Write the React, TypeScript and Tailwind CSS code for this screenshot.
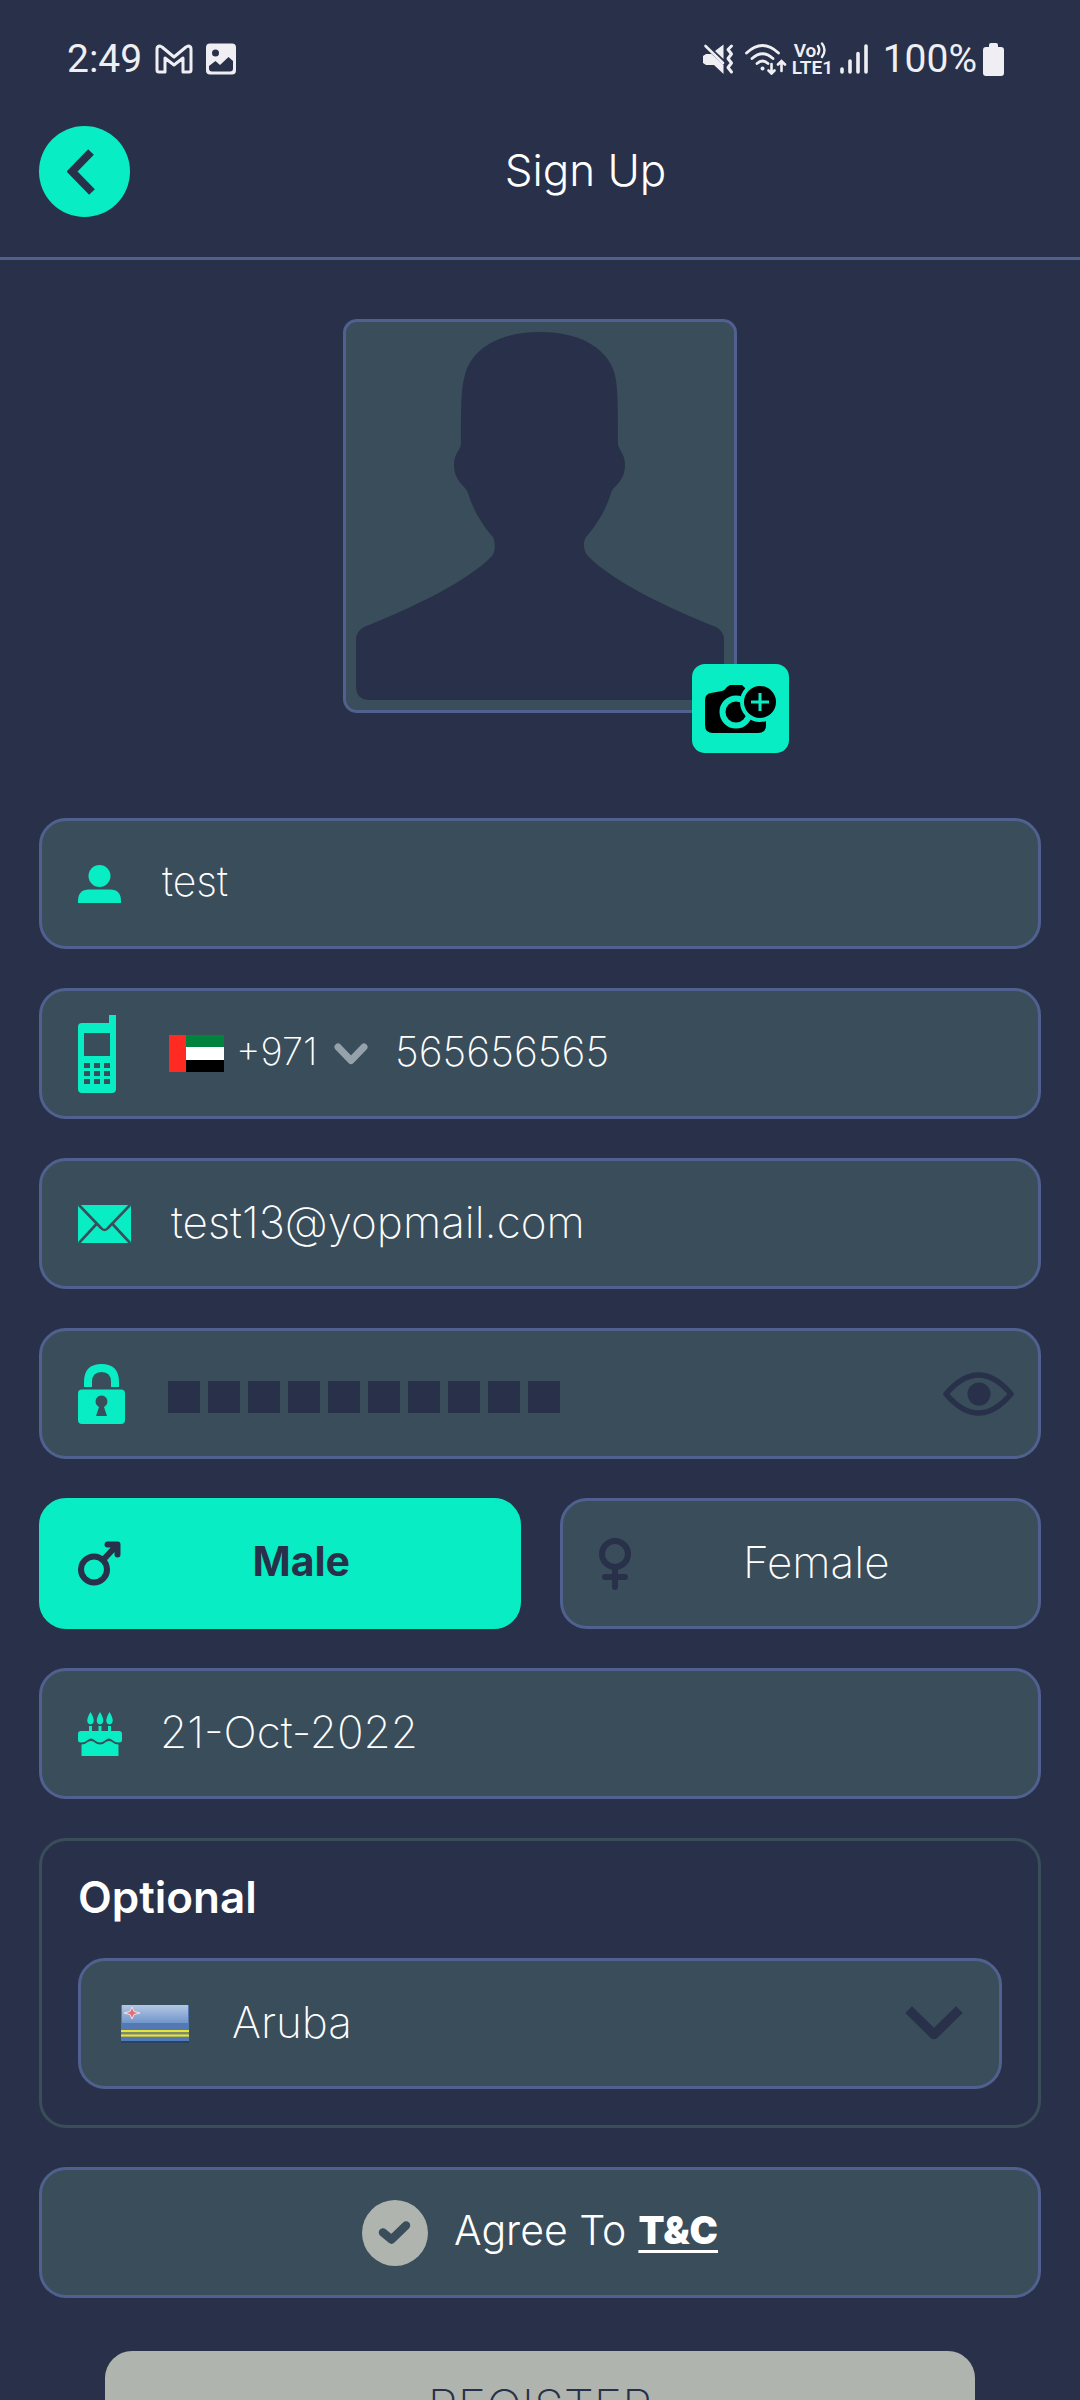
import { useState, type ReactNode } from "react";

const field =
  "flex min-h-[131px] items-center rounded-[27px] border-3 border-[#50618f] bg-[#3a4d5b] px-9";
const inputText = "min-w-0 flex-1 bg-transparent pb-1 font-extralight text-white outline-none";

function StatusBar() {
  return (
    <div className="flex h-[118px] items-center justify-between pr-[76px] pl-[67px] font-[Roboto,sans-serif] text-[39px] leading-none text-[#efeff3]">
      <div className="flex items-center">
        <span>2:49</span>
        <svg className="ml-[13px] h-[30px] w-[38px]" viewBox="0 0 38 30" fill="none" stroke="currentColor" strokeWidth="3" strokeLinejoin="round" aria-hidden="true">
          <path d="M2 5Q2 2 5 2L7 3 19 13 31 3 33 2Q36 2 36 5V26Q36 28 34 28H28V14L19 21 10 14V28H4Q2 28 2 26Z" />
        </svg>
        <svg className="ml-3 h-8 w-8" viewBox="0 0 32 32" aria-hidden="true">
          <path fill="currentColor" fillRule="evenodd" d="M5 .500H27Q31 .500 31 4.500V27.500Q31 31.500 27 31.500H5Q1 31.500 1 27.500V4.500Q1 .500 5 .500ZM10.500 6.500A3.500 3.500 0 1 0 10.500 13.500 3.500 3.500 0 0 0 10.500 6.500ZM4 23V25.500Q4 28.500 7 28.500H25Q28 28.500 28 25.500V18L23.500 14 15 22 10.500 18Z" />
        </svg>
      </div>
      <div className="flex items-center">
        <svg className="h-8 w-8" viewBox="0 0 32 32" aria-hidden="true">
          <path fill="currentColor" d="M1 13 4 11H9.500L21.500 22V31L12 22H4L1 20ZM13 8 21.500 1.500V16Z" />
          <path fill="none" stroke="currentColor" strokeWidth="2.600" strokeLinecap="round" d="M3.500 3 21 20" />
          <path fill="none" stroke="currentColor" strokeWidth="3" strokeLinecap="round" strokeLinejoin="round" d="M29.500 3 26 6.500 29.500 11 26 15.500 29.500 20 26 24.500 29.500 29" />
        </svg>
        <svg className="ml-[11px] h-8 w-[42px]" viewBox="0 0 42 32" fill="none" stroke="currentColor" strokeWidth="2.800" strokeLinecap="round" aria-hidden="true">
          <path d="M1.500 10Q17.500-5 33.500 10M7 15.500Q17.500 6 28 15.500M12 20.500Q17.500 15.500 23 20.500" />
          <circle cx="17.500" cy="25.500" r="2" fill="currentColor" stroke="none" />
          <path strokeWidth="2.600" d="M26.500 21V30M23.500 27.500 26.500 30.500 29.500 27.500M36.500 28V18.500M33 21.500 36.500 18 40 21.500" />
        </svg>
        <div className="ml-[5px] flex w-[42px] flex-col items-start text-[19px] leading-[17px] font-semibold">
          <span className="flex items-center pl-0.5">
            Vo
            <svg className="h-[17px] w-3" viewBox="0 0 12 17" fill="none" stroke="currentColor" strokeWidth="2.400" strokeLinecap="round" aria-hidden="true">
              <path d="M2 4Q4.500 8 2 12M6 1.500Q11 8 6 15" />
            </svg>
          </span>
          <span>LTE1</span>
        </div>
        <svg className="ml-[6px] h-[30px] w-7" viewBox="0 0 28 30" stroke="currentColor" strokeWidth="3.600" strokeLinecap="round" aria-hidden="true">
          <path d="M2 25V28M10 17V28M18 9.500V28M26 2V28" />
        </svg>
        <span className="ml-[15px]">100%</span>
        <svg className="ml-[6px] h-[33px] w-[21px]" viewBox="0 0 21 33" fill="currentColor" aria-hidden="true">
          <path d="M6 2Q6 0 8 0H13Q15 0 15 2V4H18Q21 4 21 7V30Q21 33 18 33H3Q0 33 0 30V7Q0 4 3 4H6Z" />
        </svg>
      </div>
    </div>
  );
}

function PhotoPicker() {
  return (
    <div className="relative mx-auto mt-[59px] w-[394px]">
      <div className="rounded-[14px] border-3 border-[#50618f] bg-[#3a4d5b]">
        <svg className="block w-full" viewBox="0 0 388 388" role="img" aria-label="Profile photo placeholder">
          <path
            fill="#283149"
            d="M194 10C245 10 265 35 269 53C272 66 272 84 272 122C272 127 279 131 279 143C279 160 267 164 265 171C260 188 250 204 240 215C237 219 237 229 242 234C266 259 320 285 370 305Q378 309 378 318V366Q378 378 364 378H24Q10 378 10 364V318Q10 309 18 305C68 285 122 259 146 234C150 229 149 219 147 215C137 204 127 188 122 171C120 164 108 160 108 143C108 131 115 127 115 122C115 84 115 66 119 53C123 35 143 10 194 10Z"
          />
        </svg>
      </div>
      <button type="button" aria-label="Add photo" className="absolute -right-[52px] -bottom-10 flex h-[89px] w-[97px] items-center justify-center rounded-[13px] bg-[#08edc3]">
        <svg className="h-[50px] w-[71px]" viewBox="0 0 71 50" aria-hidden="true">
          <path d="M0 16Q0 10 6 9L17 7Q20 6 22 3L25 1H37L41 5H61V41Q61 49 53 49H8Q0 49 0 41Z" />
          <circle cx="31" cy="28" r="13.500" fill="none" stroke="#08edc3" strokeWidth="6" />
          <path fill="#08edc3" d="M41 0H71V18H55Z" />
          <circle cx="55" cy="18" r="20" fill="#08edc3" />
          <circle cx="55" cy="18" r="16" />
          <path fill="none" stroke="#08edc3" strokeWidth="3" d="M46 18H64M55 9V27" />
        </svg>
      </button>
    </div>
  );
}

function Gender({ label, checked, onChange, icon }: { label: string; checked: boolean; onChange: () => void; icon: ReactNode }) {
  return (
    <label
      className={
        checked
          ? "flex min-h-[131px] flex-1 cursor-pointer items-center rounded-[27px] border-3 border-[#08edc3] bg-[#08edc3] px-9 text-[41px] font-bold text-[#283149]"
          : "flex min-h-[131px] flex-1 cursor-pointer items-center rounded-[27px] border-3 border-[#50618f] bg-[#3a4d5b] px-9 text-[44px] font-extralight text-white"
      }
    >
      <input type="radio" name="gender" className="sr-only" checked={checked} onChange={onChange} />
      {icon}
      <span className="flex-1 pb-1 text-center">{label}</span>
    </label>
  );
}

export default function App() {
  const [password, setPassword] = useState("password13");
  const [visible, setVisible] = useState(false);
  const [gender, setGender] = useState("male");
  const [agreed, setAgreed] = useState(true);

  return (
    <div className="flex h-screen flex-col overflow-hidden bg-[#283149] font-[Inter,sans-serif] text-white">
      <StatusBar />
      <header className="flex items-center border-b-3 border-[#50618f] px-[39px] pt-2 pb-10">
        <button type="button" aria-label="Back" className="flex h-[91px] w-[91px] items-center justify-center rounded-full bg-[#08edc3] pr-[7px]">
          <svg className="h-[46px] w-[28px]" viewBox="0 0 28 46" fill="none" stroke="#283149" strokeWidth="8" aria-hidden="true">
            <path d="M24 3 5 22.500 25 43" />
          </svg>
        </button>
        <h1 className="flex-1 pb-1 text-center text-[44px] font-light">Sign Up</h1>
      </header>

      <main className="min-h-0 flex-1 overflow-y-auto [scrollbar-width:none]">
        <PhotoPicker />
        <form className="mt-[105px] flex flex-col gap-[39px] px-[39px] pb-10" onSubmit={(e) => e.preventDefault()}>
          <div className={field}>
            <svg className="h-[38px] w-[43px]" viewBox="0 0 43 38" fill="#08edc3" aria-hidden="true">
              <circle cx="21.500" cy="11" r="11" />
              <path d="M0 38V36Q0 24.500 11 24.500H32Q43 24.500 43 36V38Z" />
            </svg>
            <input aria-label="Name" defaultValue="test" className={`${inputText} ml-[41px] text-[41px]`} />
          </div>

          <div className={field}>
            <svg className="h-[78px] w-[38px]" viewBox="0 0 38 78" aria-hidden="true">
              <path fill="#08edc3" d="M31 0H38V74Q38 78 34 78H4Q0 78 0 74V12Q0 8 4 8H31Z" />
              <path fill="#3a4d5b" d="M6 18H32V41H6ZM6 48H12V53H6ZM16 48H22V53H16ZM26 48H32V53H26ZM6 56H12V61H6ZM16 56H22V61H16ZM26 56H32V61H26ZM6 64H12V69H6ZM16 64H22V69H16ZM26 64H32V69H26Z" />
            </svg>
            <svg className="ml-[53px] h-[37px] w-[55px]" viewBox="0 0 55 37" role="img" aria-label="United Arab Emirates">
              <path fill="#00843d" d="M0 0H55V12H0Z" />
              <path fill="#fff" d="M0 12H55V25H0Z" />
              <path d="M0 25H55V37H0Z" />
              <path fill="#ff2b23" d="M0 0H17V37H0Z" />
            </svg>
            <select aria-label="Country code" defaultValue="+971" className="ml-3 appearance-none bg-transparent pb-1 text-[38px] font-extralight outline-none">
              <option>+971</option>
            </select>
            <svg className="ml-4 h-[22px] w-[34px]" viewBox="0 0 34 22" fill="none" stroke="#95a1ab" strokeWidth="7" strokeLinecap="round" strokeLinejoin="round" aria-hidden="true">
              <path d="M4 4 17 17.500 30 4" />
            </svg>
            <input aria-label="Phone number" type="tel" defaultValue="565656565" className={`${inputText} ml-[27px] text-[41px]`} />
          </div>

          <div className={field}>
            <svg className="h-[38px] w-[53px]" viewBox="0 0 53 38" aria-hidden="true">
              <rect width="53" height="38" rx="1.500" fill="#08edc3" />
              <path fill="none" stroke="#3a4d5b" strokeWidth="2.600" d="M1 0 23 23Q26.500 27 30 23L52 0M1 38 18.500 19M52 38 34.500 19" />
            </svg>
            <input aria-label="Email" type="email" defaultValue="test13@yopmail.com" className={`${inputText} ml-10 text-[44px]`} />
          </div>

          <div className={`${field} pr-6`}>
            <svg className="h-[60px] w-[47px]" viewBox="0 0 47 60" aria-hidden="true">
              <path fill="none" stroke="#08edc3" strokeWidth="8" d="M10 23V18Q10 4 23.500 4Q37 4 37 18V23" />
              <rect y="25.500" width="47" height="34.500" rx="4" fill="#08edc3" />
              <path fill="#3a4d5b" d="M18 52 21 43A6 6 0 1 1 26 43L29 52Z" />
            </svg>
            <div className="relative ml-[43px] flex flex-1 items-center">
              <input
                aria-label="Password"
                type={visible ? "text" : "password"}
                value={password}
                onChange={(e) => setPassword(e.target.value)}
                className={visible ? `${inputText} text-[41px]` : "min-w-0 flex-1 bg-transparent text-[41px] text-transparent outline-none"}
              />
              {!visible && (
                <div className="pointer-events-none absolute inset-0 flex items-center gap-2 pt-1.5" aria-hidden="true">
                  {Array.from(password, (_, i) => (
                    <span key={i} className="size-8 bg-[#283149]" />
                  ))}
                </div>
              )}
            </div>
            <button type="button" aria-label="Show password" onClick={() => setVisible(!visible)}>
              <svg className="block h-11 w-[71px]" viewBox="0 0 71 44" aria-hidden="true">
                <path fill="none" stroke="#283149" strokeWidth="5.500" strokeLinejoin="round" d="M3 22Q19 3 35.500 3T68 22Q52 41 35.500 41T3 22Z" />
                <circle cx="36" cy="22" r="11.500" fill="#283149" />
              </svg>
            </button>
          </div>

          <div role="radiogroup" aria-label="Gender" className="flex gap-[39px]">
            <Gender
              label="Male"
              checked={gender === "male"}
              onChange={() => setGender("male")}
              icon={
                <svg className="h-[45px] w-[43px]" viewBox="0 0 43 45" fill="none" stroke="#283149" strokeWidth="6" strokeLinecap="round" strokeLinejoin="round" aria-hidden="true">
                  <circle cx="16" cy="28.500" r="13" />
                  <path d="M26 18 39 4M29.500 3.500H39.500V13.500" />
                </svg>
              }
            />
            <Gender
              label="Female"
              checked={gender === "female"}
              onChange={() => setGender("female")}
              icon={
                <svg className="h-[54px] w-8" viewBox="0 0 32 54" fill="none" stroke="#283149" strokeWidth="6" strokeLinecap="round" aria-hidden="true">
                  <circle cx="16" cy="17" r="13" />
                  <path d="M16 30V50M6 40H26" />
                </svg>
              }
            />
          </div>

          <div className={field}>
            <svg className="h-11 w-11" viewBox="0 0 44 44" fill="#08edc3" aria-hidden="true">
              <path d="M12.500 0Q19 11 12.500 12.500 6 11 12.500 0ZM22 0Q28.500 11 22 12.500 15.500 11 22 0ZM31.500 0Q38 11 31.500 12.500 25 11 31.500 0Z" />
              <path d="M11 14H14V19H20.500V14H23.500V19H30V14H33V19H41Q44 19 44 22V28Q44 30.500 41 30.500C36 31 34 26.500 31 26.500S26 30.500 22 30.500 16 26.500 13 26.500 8 31 3 30.500Q0 30.500 0 28V22Q0 19 3 19H11Z" />
              <path d="M3.500 32.500C8 32.500 10 29 13 29S18 32.500 22 32.500 28 29 31 29 36 32.500 40.500 32.500V44H3.500Z" />
            </svg>
            <input aria-label="Date of birth" defaultValue="21-Oct-2022" className={`${inputText} ml-[38px] text-[44px]`} />
          </div>

          <section className="rounded-[27px] border-3 border-[#3a4d5b] px-9 pt-[27px] pb-9">
            <h2 className="mb-8 text-[44px] leading-[58px] font-semibold">Optional</h2>
            <div className={`${field} pl-10`}>
              <svg className="h-[38px] w-[68px]" viewBox="0 0 68 38" role="img" aria-label="Flag of Aruba">
                <defs>
                  <linearGradient id="sky" x1="0" y1="0" x2="0" y2="1">
                    <stop offset="0" stopColor="#b3c7e2" />
                    <stop offset="1" stopColor="#7196ca" />
                  </linearGradient>
                </defs>
                <path fill="#2b4264" d="M0 36H68V38H0Z" />
                <path fill="#5279b4" d="M0 0H68V36H0Z" />
                <path fill="url(#sky)" d="M1 0H67V18H1Z" />
                <path fill="#7d8b68" d="M0 25H68V32H0Z" />
                <path fill="#e8e337" d="M0 25H68V27H0ZM0 29.500H68V31.500H0Z" />
                <path fill="#e26f78" stroke="#f4dfe6" d="M11 2 13 6.500 19 8 13 9.500 11 14 9 9.500 3 8 9 6.500Z" />
              </svg>
              <select aria-label="Country" defaultValue="Aruba" className="ml-[43px] min-w-0 flex-1 appearance-none bg-transparent pb-1 text-[44px] font-extralight outline-none">
                <option>Aruba</option>
              </select>
              <svg className="h-9 w-[58px]" viewBox="0 0 58 36" fill="none" stroke="#283149" strokeWidth="9.500" strokeLinejoin="round" strokeLinecap="square" aria-hidden="true">
                <path d="M7 7 29 28.500 51 7" />
              </svg>
            </div>
          </section>

          <div className={`${field} justify-center`}>
            <label className="flex cursor-pointer items-center text-[41px] font-light">
              <input type="checkbox" className="sr-only" checked={agreed} onChange={() => setAgreed(!agreed)} />
              <span className="mr-[26px] flex size-[66px] items-center justify-center rounded-full bg-[#afb5ae]">
                {agreed && (
                  <svg className="h-[25px] w-[33px]" viewBox="0 0 33 25" fill="none" stroke="#3a4d5b" strokeWidth="8.500" strokeLinecap="round" strokeLinejoin="round" aria-hidden="true">
                    <path d="M5 12.500 13.500 19.500 28 5.500" />
                  </svg>
                )}
              </span>
              <span className="pb-1">Agree To</span>
            </label>
            <a href="#terms" className="ml-3 pb-1 text-[38px] font-black underline decoration-3 underline-offset-6">
              T&amp;C
            </a>
          </div>

          <button type="submit" className="mx-[66px] mt-[14px] min-h-[111px] rounded-[27px] bg-[#afb5ae] text-[48px] font-extralight text-[#283149]">
            REGISTER
          </button>
        </form>
      </main>
    </div>
  );
}
